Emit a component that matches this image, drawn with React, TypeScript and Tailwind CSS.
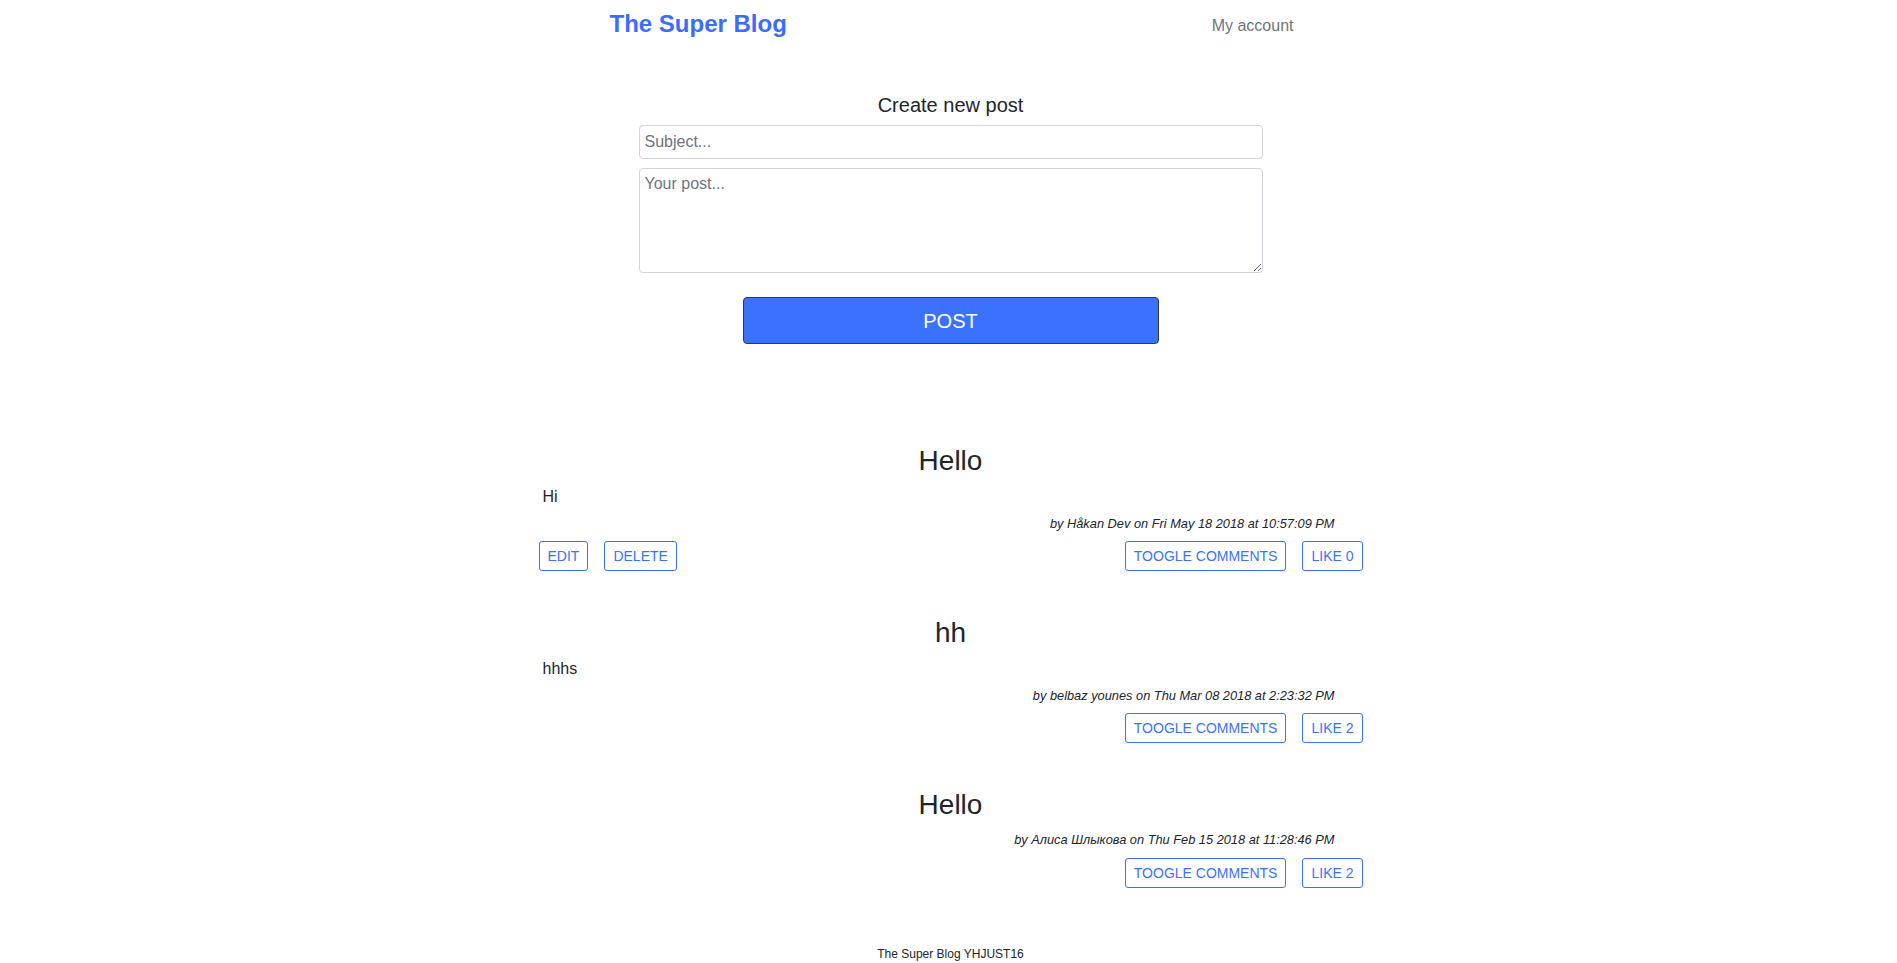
import React from 'react';

type Post = {
  title: string;
  body?: string;
  author: string;
  date: string;
  likes: number;
  mine?: boolean;
};

const posts: Post[] = [
  { title: 'Hello', body: 'Hi', author: 'Håkan Dev', date: 'Fri May 18 2018 at 10:57:09 PM', likes: 0, mine: true },
  { title: 'hh', body: 'hhhs', author: 'belbaz younes', date: 'Thu Mar 08 2018 at 2:23:32 PM', likes: 2 },
  { title: 'Hello', author: 'Алиса Шлыкова', date: 'Thu Feb 15 2018 at 11:28:46 PM', likes: 2 },
];

const OutlineButton = ({ children }: { children: React.ReactNode }) => (
  <button className="h-[30px] rounded-[3px] border border-[#3a72ff] bg-white px-2 text-[14px] uppercase leading-none text-[#3a72ff]">
    {children}
  </button>
);

const PostItem = ({ post }: { post: Post }) => (
  <article className="mx-auto mb-[45px] w-[824px]">
    <h3 className="text-center text-[28px] leading-[34px]">{post.title}</h3>
    {post.body && <p className="mt-[7px] pl-[4px] text-[16px] leading-6">{post.body}</p>}
    <p className={`${post.body ? 'mt-[5px]' : 'mt-[8px]'} pr-[28px] text-right text-[12.8px] italic leading-5`}>
      by {post.author} on {post.date}
    </p>
    <div className={`${post.body ? 'mt-[7px]' : 'mt-[8px]'} flex justify-between`}>
      <div className="flex gap-4">
        {post.mine && (
          <>
            <OutlineButton>Edit</OutlineButton>
            <OutlineButton>Delete</OutlineButton>
          </>
        )}
      </div>
      <div className="flex gap-4">
        <OutlineButton>Toogle comments</OutlineButton>
        <OutlineButton>Like {post.likes}</OutlineButton>
      </div>
    </div>
  </article>
);

export default function App() {
  return (
    <div className="min-h-screen bg-white pl-[4px] font-['Liberation_Sans',Arial,sans-serif] text-[#212529]">
      <header className="mx-auto flex w-[686px] items-center justify-between pl-[2px] pt-[9px]">
        <a href="#" className="text-[24px] font-bold leading-[29px] text-[#3c6cff]">
          The Super Blog
        </a>
        <a href="#" className="mt-[4px] text-[16px] leading-6 text-[#6c757d]">
          My account
        </a>
      </header>

      <section className="mx-auto mt-[55px] w-[624px]">
        <h2 className="text-center text-[20px] leading-6">Create new post</h2>
        <input
          type="text"
          placeholder="Subject..."
          className="mt-[8px] block h-[34px] w-full rounded border border-[#ced4da] px-[5px] text-[16px] outline-none placeholder:text-[#6c757d]"
        />
        <textarea
          placeholder="Your post..."
          className="mt-[9px] block h-[105px] w-full rounded border border-[#ced4da] px-[5px] py-[5px] text-[16px] leading-5 outline-none placeholder:text-[#6c757d]"
        />
        <button className="mx-auto mt-[24px] block h-[47px] w-[416px] rounded border border-[#343a40] bg-[#3a72ff] text-[20px] text-white">
          POST
        </button>
      </section>

      <main className="mt-[100px]">
        {posts.map((p, i) => (
          <PostItem key={i} post={p} />
        ))}
      </main>

      <footer className="mt-[58px] pb-2 text-center text-[12px] leading-4">The Super Blog YHJUST16</footer>
    </div>
  );
}
